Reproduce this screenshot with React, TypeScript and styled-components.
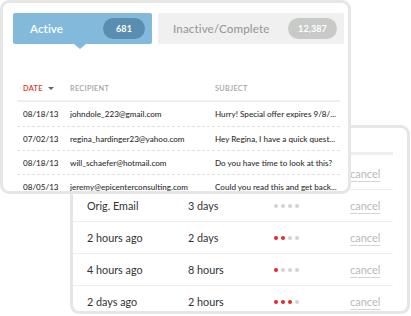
import React from "react";
import styled, { createGlobalStyle } from "styled-components";

const Global = createGlobalStyle`
  html, body { margin: 0; padding: 0; background: #ffffff; }
  body { font-family: Lato, "Open Sans", sans-serif; color: #333; }
  * { box-sizing: border-box; }
`;

const Stage = styled.div`
  display: grid;
  width: 411px;
  height: 316px;
  overflow: hidden;
`;

const Card = styled.div`
  grid-area: 1 / 1;
  background: #fff;
  border: 3px solid #e6e6e6;
  border-radius: 9px;
  overflow: hidden;
`;

const BackCard = styled(Card)`
  align-self: start;
  justify-self: start;
  margin: 125px 0 0 70px;
  width: 340px;
  height: 189px;
`;

const FrontCard = styled(Card)`
  align-self: start;
  justify-self: start;
  z-index: 1;
  width: 351px;
  height: 194px;
  padding: 10px 0 0 10px;
`;

const Tabs = styled.div`
  display: flex;
  gap: 6px;
`;

const Tab = styled.div<{ $active?: boolean }>`
  position: relative;
  display: flex;
  align-items: center;
  justify-content: space-between;
  height: 31px;
  width: ${(p) => (p.$active ? 139 : 186)}px;
  padding: 0 7px 0 ${(p) => (p.$active ? 17 : 15)}px;
  border-radius: 2px;
  background: ${(p) => (p.$active ? "#83badb" : "#f0f0f0")};
  color: ${(p) => (p.$active ? "#ffffff" : "#9a9a9a")};
  font-size: 11.6px;
  font-weight: ${(p) => (p.$active ? 600 : 500)};
  letter-spacing: 0.1px;
`;

const Pointer = styled.span`
  position: absolute;
  left: 61px;
  bottom: -5px;
  width: 0;
  height: 0;
  border-left: 6px solid transparent;
  border-right: 6px solid transparent;
  border-top: 5px solid #83badb;
`;

const Badge = styled.span<{ $active?: boolean }>`
  display: inline-flex;
  align-items: center;
  justify-content: center;
  height: 21px;
  min-width: ${(p) => (p.$active ? 42 : 49)}px;
  padding: 0 7px;
  border-radius: 11px;
  background: ${(p) => (p.$active ? "#5a8db2" : "#c7cac7")};
  color: #fff;
  font-size: 9px;
  font-weight: 700;
`;

const Table = styled.div`
  margin-top: 30px;
  width: 327px;
  padding-left: 4px;
`;

const Grid = styled.div`
  display: grid;
  grid-template-columns: 47px 145px 1fr;
  align-items: center;
`;

const HeadRow = styled(Grid)`
  height: 28px;
  padding: 3px 0 0 6px;
  border-bottom: 2px solid #eeeeee;
  font-size: 7.3px;
  font-weight: 600;
  letter-spacing: 0.3px;
  color: #a5a5a5;
`;

const Sort = styled.span`
  color: #e03131;
  display: inline-flex;
  align-items: center;
  gap: 5px;
`;

const Caret = styled.span`
  width: 0;
  height: 0;
  border-left: 3px solid transparent;
  border-right: 3px solid transparent;
  border-top: 3px solid #666;
`;

const Row = styled(Grid)`
  height: 24px;
  padding-left: 6px;
  font-size: 8.1px;
  line-height: 12px;
  font-weight: 500;
  color: #2e2e2e;
  white-space: nowrap;
  & > span {
    overflow: hidden;
  }
  & + & {
    border-top: 1px dashed #e2e2e2;
  }
`;

const BackHead = styled.div`
  height: 27px;
  margin-right: 14px;
  border-bottom: 3px solid #eeeeee;
`;

const BackRows = styled.div`
  margin-top: 3px;
  margin-right: 14px;
`;

const BackRow = styled.div`
  display: grid;
  grid-template-columns: 101px 86px 76px 1fr;
  align-items: center;
  height: 32px;
  padding-left: 14px;
  border-bottom: 1px solid #eeeeee;
  font-size: 10.8px;
  color: #333;
`;

const Dots = styled.div`
  display: flex;
  gap: 3px;
`;

const Dot = styled.span<{ $on?: boolean }>`
  width: 4px;
  height: 4px;
  border-radius: 50%;
  background: ${(p) => (p.$on ? "#e02a2a" : "#d2d2d2")};
`;

const Cancel = styled.span`
  color: #b9b9b9;
  font-size: 11px;
  text-decoration: underline;
  text-decoration-color: #d5d5d5;
  text-underline-offset: 3px;
  text-decoration-thickness: 1px;
`;

const emails = [
  ["08/18/13", "johndole_223@gmail.com", "Hurry! Special offer expires 9/8/..."],
  ["07/02/13", "regina_hardinger23@yahoo.com", "Hey Regina, I have a quick quest..."],
  ["08/18/13", "will_schaefer@hotmail.com", "Do you have time to look at this?"],
  ["08/05/13", "jeremy@epicenterconsulting.com", "Could you read this and get back..."],
];

const schedule: [string, string, number][] = [
  ["", "", 0],
  ["Orig. Email", "3 days", 0],
  ["2 hours ago", "2 days", 2],
  ["4 hours ago", "8 hours", 1],
  ["2 days ago", "2 hours", 3],
];

export default function App() {
  return (
    <>
      <Global />
      <Stage>
        <BackCard>
          <BackHead />
          <BackRows>
            {schedule.map(([a, b, n], i) => (
              <BackRow key={i}>
                <span>{a}</span>
                <span>{b}</span>
                <Dots>
                  {[0, 1, 2, 3].map((d) => (
                    <Dot key={d} $on={d < n} />
                  ))}
                </Dots>
                <Cancel>cancel</Cancel>
              </BackRow>
            ))}
          </BackRows>
        </BackCard>
        <FrontCard>
          <Tabs>
            <Tab $active>
              Active
              <Badge $active>681</Badge>
              <Pointer />
            </Tab>
            <Tab>
              Inactive/Complete
              <Badge>12,387</Badge>
            </Tab>
          </Tabs>
          <Table>
            <HeadRow>
              <Sort>
                DATE <Caret />
              </Sort>
              <span>RECIPIENT</span>
              <span>SUBJECT</span>
            </HeadRow>
            {emails.map((e, i) => (
              <Row key={i}>
                <span>{e[0]}</span>
                <span>{e[1]}</span>
                <span>{e[2]}</span>
              </Row>
            ))}
          </Table>
        </FrontCard>
      </Stage>
    </>
  );
}
